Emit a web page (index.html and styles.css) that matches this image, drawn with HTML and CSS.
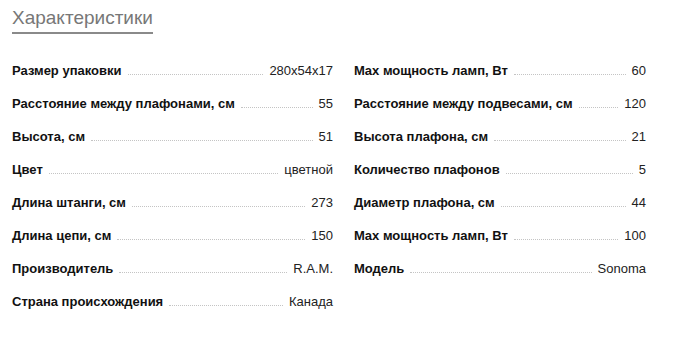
FILE: index.html
```html
<!DOCTYPE html>
<html lang="ru">
<head>
<meta charset="utf-8">
<link rel="stylesheet" href="styles.css">
</head>
<body>
<div class="specs">
  <h2 class="title">Характеристики</h2>
  <div class="grid">
    <div class="col left">
      <div class="row"><span class="lbl">Размер упаковки</span><span class="dots"></span><span class="val">280x54x17</span></div>
      <div class="row"><span class="lbl">Расстояние между плафонами, см</span><span class="dots"></span><span class="val">55</span></div>
      <div class="row"><span class="lbl">Высота, см</span><span class="dots"></span><span class="val">51</span></div>
      <div class="row"><span class="lbl">Цвет</span><span class="dots"></span><span class="val">цветной</span></div>
      <div class="row"><span class="lbl">Длина штанги, см</span><span class="dots"></span><span class="val">273</span></div>
      <div class="row"><span class="lbl">Длина цепи, см</span><span class="dots"></span><span class="val">150</span></div>
      <div class="row"><span class="lbl">Производитель</span><span class="dots"></span><span class="val">R.A.M.</span></div>
      <div class="row"><span class="lbl">Страна происхождения</span><span class="dots"></span><span class="val">Канада</span></div>
    </div>
    <div class="col right">
      <div class="row"><span class="lbl">Max мощность ламп, Вт</span><span class="dots"></span><span class="val">60</span></div>
      <div class="row"><span class="lbl">Расстояние между подвесами, см</span><span class="dots"></span><span class="val">120</span></div>
      <div class="row"><span class="lbl">Высота плафона, см</span><span class="dots"></span><span class="val">21</span></div>
      <div class="row"><span class="lbl">Количество плафонов</span><span class="dots"></span><span class="val">5</span></div>
      <div class="row"><span class="lbl">Диаметр плафона, см</span><span class="dots"></span><span class="val">44</span></div>
      <div class="row"><span class="lbl">Max мощность ламп, Вт</span><span class="dots"></span><span class="val">100</span></div>
      <div class="row"><span class="lbl">Модель</span><span class="dots"></span><span class="val">Sonoma</span></div>
    </div>
  </div>
</div>
</body>
</html>
```

FILE: styles.css
```css
html, body {
  margin: 0;
  padding: 0;
  background: #fff;
}
body {
  font-family: "Liberation Sans", Arial, sans-serif;
  color: #111;
}
.specs {
  padding: 6px 0 0 12px;
}
.title {
  display: inline-block;
  margin: 0;
  font-size: 19px;
  font-weight: normal;
  color: #777;
  line-height: 24px;
  padding: 0 0 2px 0;
  border-bottom: 2px solid #8a8a8a;
}
.grid {
  display: grid;
  grid-template-columns: 321px 292px;
  column-gap: 21px;
  margin-top: 29px;
}
.col {
  display: flex;
  flex-direction: column;
}
.row {
  display: flex;
  align-items: baseline;
  height: 33px;
  font-size: 13px;
  line-height: 16px;
}
.lbl {
  font-weight: bold;
  color: #111;
  white-space: nowrap;
}
.dots {
  flex: 1;
  margin: 0 6px;
  border-bottom: 1px dotted #c4c4c4;
  height: 1px;
}
.val {
  color: #222;
  white-space: nowrap;
}
```
